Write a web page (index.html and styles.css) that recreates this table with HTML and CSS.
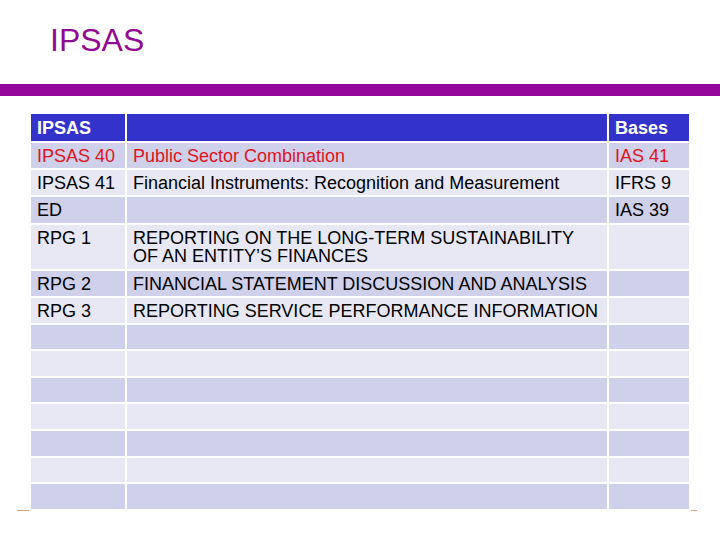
FILE: index.html
```html
<!DOCTYPE html>
<html lang="en">
<head>
<meta charset="utf-8">
<title>IPSAS</title>
<link rel="stylesheet" href="styles.css">
</head>
<body>
<header class="title-area">
  <h1 class="title">IPSAS</h1>
</header>
<div class="bar"></div>
<main class="grid">
  <div class="row head"><div>IPSAS</div><div></div><div>Bases</div></div>
  <div class="row dark red"><div>IPSAS 40</div><div>Public Sector Combination</div><div>IAS 41</div></div>
  <div class="row light"><div>IPSAS 41</div><div>Financial Instruments: Recognition and Measurement</div><div>IFRS 9</div></div>
  <div class="row dark"><div>ED</div><div></div><div>IAS 39</div></div>
  <div class="row light top"><div>RPG 1</div><div>REPORTING ON THE LONG-TERM SUSTAINABILITY OF AN ENTITY’S FINANCES</div><div></div></div>
  <div class="row dark"><div>RPG 2</div><div>FINANCIAL STATEMENT DISCUSSION AND ANALYSIS</div><div></div></div>
  <div class="row light"><div>RPG 3</div><div>REPORTING SERVICE PERFORMANCE INFORMATION</div><div></div></div>
  <div class="row dark"><div></div><div></div><div></div></div>
  <div class="row light"><div></div><div></div><div></div></div>
  <div class="row dark"><div></div><div></div><div></div></div>
  <div class="row light"><div></div><div></div><div></div></div>
  <div class="row dark"><div></div><div></div><div></div></div>
  <div class="row light"><div></div><div></div><div></div></div>
  <div class="row dark"><div></div><div></div><div></div></div>
</main>
<footer class="footer"><span class="mark mark-left"></span><span class="mark mark-right"></span></footer>
</body>
</html>
```

FILE: styles.css
```css
html, body {
  margin: 0;
  padding: 0;
  background: #ffffff;
}
body {
  width: 720px;
  height: 540px;
  overflow: hidden;
  font-family: "Liberation Sans", Arial, sans-serif;
}
.title-area {
  padding: 24px 0 0 50px;
  height: 84px;
  box-sizing: border-box;
}
.title {
  margin: 0;
  font-size: 32px;
  line-height: 32px;
  font-weight: normal;
  color: #900a93;
}
.bar {
  height: 12px;
  background: #93079a;
}
.grid {
  margin: 18px 0 0 31px;
  display: grid;
  grid-template-columns: 94px 480px 80px;
  grid-template-rows: 27px 25px 25px 26px 44px 25px 25px 24px 25px 24px 25px 25px 24px 25px;
  gap: 2px;
  width: 658px;
}
.row {
  display: contents;
}
.row > div {
  display: flex;
  align-items: center;
  padding: 0 6px;
  font-size: 18px;
  line-height: 18px;
  color: #000;
}
.top > div {
  align-items: flex-start;
  padding-top: 4px;
}
.head > div {
  background: #3333cc;
  color: #ffffff;
  font-weight: bold;
}
.dark > div {
  background: #cfd0ea;
}
.light > div {
  background: #e8e8f5;
}
.red > div {
  color: #e0141c;
}
.footer {
  display: flex;
  justify-content: space-between;
  padding: 0 23px 0 17px;
  margin-top: 1px;
}
.mark {
  display: block;
  height: 1px;
  background: #cfa283;
}
.mark-left { width: 12px; }
.mark-right { width: 6px; }
```
